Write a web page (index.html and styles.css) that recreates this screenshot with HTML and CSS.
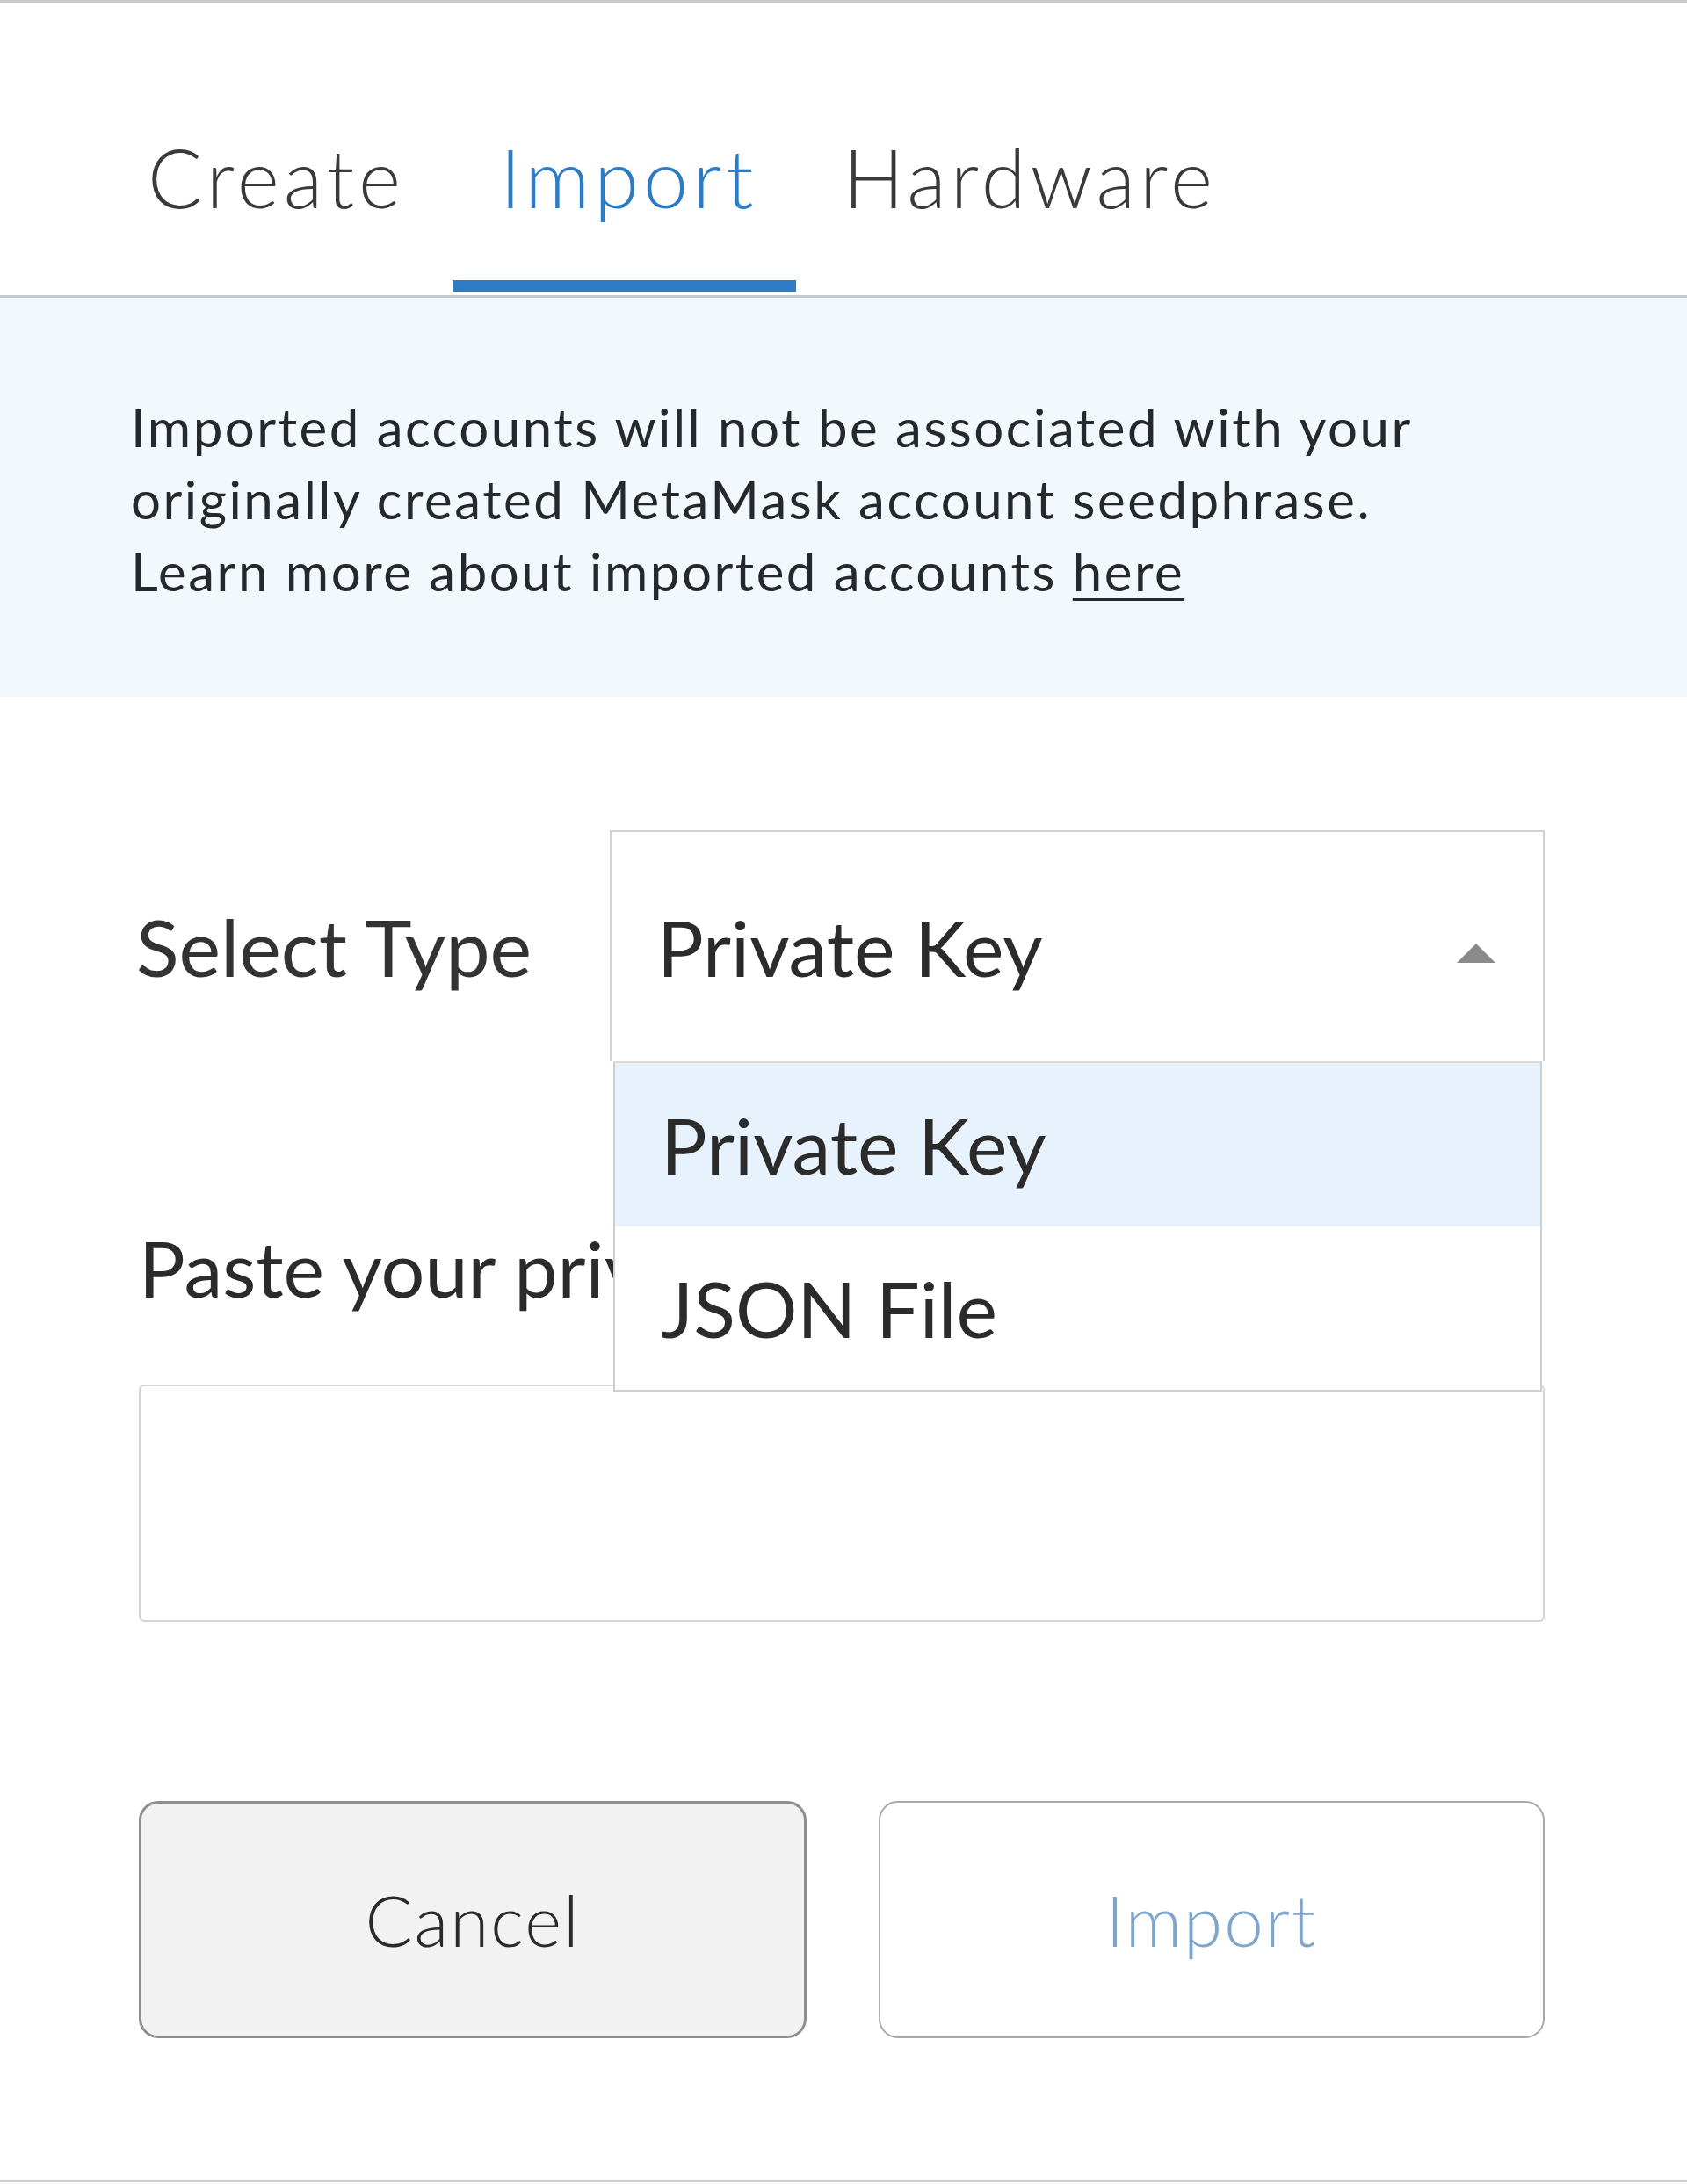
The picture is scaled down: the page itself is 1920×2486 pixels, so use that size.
FILE: index.html
```html
<!DOCTYPE html>
<html lang="en">
<head>
<meta charset="utf-8">
<title>Import account</title>
<link rel="stylesheet" href="styles.css">
</head>
<body>
<div class="page">
  <nav class="tabs">
    <div class="tab">Create</div>
    <div class="tab active">Import</div>
    <div class="tab last">Hardware</div>
  </nav>

  <section class="notice">
    <p>Imported accounts will not be associated with your<br>originally created MetaMask account seedphrase.<br>Learn more about imported accounts <a class="link" href="#">here</a></p>
  </section>

  <section class="form">
    <div class="select-row">
      <div class="field-label">Select Type</div>
      <div class="dropdown">
        <div class="control">
          <span class="value">Private Key</span>
          <svg class="arrow" width="44" height="22" viewBox="0 0 44 22"><polygon points="22,0 44,22 0,22" fill="#8a8a8a"/></svg>
        </div>
        <ul class="menu">
          <li class="option selected">Private Key</li>
          <li class="option">JSON File</li>
        </ul>
      </div>
    </div>

    <div class="paste-label">Paste your private key string here:</div>
    <div class="key-input"></div>
  </section>

  <section class="actions">
    <button class="btn btn-cancel">Cancel</button>
    <button class="btn btn-import">Import</button>
  </section>
</div>
</body>
</html>
```

FILE: styles.css
```css
* { box-sizing: border-box; }
html, body { margin: 0; padding: 0; background: #ffffff; }
body { font-family: "Lato", "Liberation Sans", sans-serif; color: #24272a; }

.page {
  width: 1920px;
  height: 2484px;
  border-top: 3px solid #c9c9c9;
  border-bottom: 3px solid #d0d0d0;
  display: flex;
  flex-direction: column;
}

.tabs {
  height: 336px;
  display: flex;
  align-items: stretch;
  padding-left: 114px;
  border-bottom: 3px solid #c6cad1;
}
.tab {
  font-size: 92px;
  font-weight: 300;
  letter-spacing: 5px;
  color: #3a3a3a;
  padding: 0 54px 71px 54px;
  display: flex;
  align-items: flex-end;
  border-bottom: 13px solid transparent;
  margin-bottom: 4px;
  line-height: 1;
}
.tab.active {
  color: #2b7bc6;
  border-bottom-color: #2f7cc6;
  padding-right: 44px;
}
.tab.last { padding-left: 53px; }

.notice {
  background: #f3f8fd;
  height: 454px;
  padding: 106px 0 0 149px;
}
.notice p {
  margin: 0;
  font-size: 60px;
  line-height: 82px;
  letter-spacing: 2.5px;
  color: #26292c;
  font-weight: 400;
}
.link { color: #26292c; text-decoration: underline; text-underline-offset: 8px; text-decoration-thickness: 3px; }

.form {
  padding: 152px 162px 0 155px;
}
.select-row {
  display: flex;
  align-items: stretch;
}
.field-label {
  width: 539px;
  display: flex;
  align-items: center;
  font-size: 90px;
  font-weight: 400;
  color: #333333;
}
.dropdown {
  position: relative;
  flex: 1;
}
.control {
  height: 263px;
  border: 2px solid #d2d2d2;
  border-bottom: none;
  background: #fff;
  display: flex;
  align-items: center;
  justify-content: space-between;
  padding: 0 54px 0 52px;
}
.value {
  font-size: 88px;
  color: #2b2b2b;
}
.arrow { margin-top: 14px; }
.menu {
  position: absolute;
  left: 4px;
  right: 3px;
  top: 263px;
  margin: 0;
  padding: 0;
  list-style: none;
  background: #fff;
  border: 2px solid #cfcfcf;
  border-top: 2px solid #dcdcdc;
  z-index: 2;
}
.option {
  height: 186px;
  display: flex;
  align-items: center;
  padding-left: 52px;
  font-size: 88px;
  color: #2b2b2b;
}
.option.selected { background: #e8f2fd; }

.paste-label {
  margin-top: 175px;
  margin-left: 3px;
  width: 540px;
  height: 120px;
  line-height: 120px;
  font-size: 88px;
  color: #2b2b2b;
  white-space: nowrap;
  overflow: hidden;
}
.key-input {
  margin-top: 73px;
  margin-left: 3px;
  height: 270px;
  border: 2px solid #d4d4d4;
  border-radius: 6px;
  background: #fff;
}

.actions {
  display: flex;
  gap: 82px;
  padding: 204px 162px 0 158px;
}
.btn {
  flex: 1;
  height: 270px;
  border-radius: 22px;
  font-family: "Lato", "Liberation Sans", sans-serif;
  font-size: 80px;
  font-weight: 300;
  letter-spacing: 2px;
  cursor: pointer;
}
.btn-cancel {
  background: #f2f2f2;
  border: 3px solid #8e8e8e;
  color: #2a2a2a;
}
.btn-import {
  background: #ffffff;
  border: 2px solid #a9a9a9;
  color: #7ea6cd;
}
```
